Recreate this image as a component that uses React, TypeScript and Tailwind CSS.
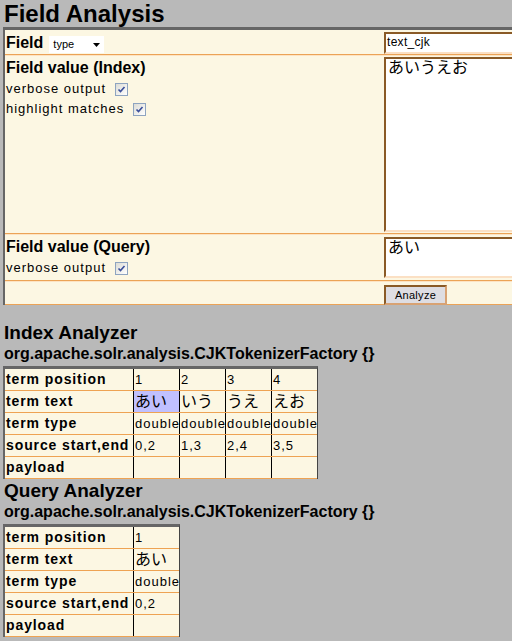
import React from "react";

type Token = {
  pos: string;
  text: string;
  type: string;
  offsets: string;
  highlight?: boolean;
};

const indexTokens: Token[] = [
  { pos: "1", text: "あい", type: "double", offsets: "0,2", highlight: true },
  { pos: "2", text: "いう", type: "double", offsets: "1,3" },
  { pos: "3", text: "うえ", type: "double", offsets: "2,4" },
  { pos: "4", text: "えお", type: "double", offsets: "3,5" },
];

const queryTokens: Token[] = [
  { pos: "1", text: "あい", type: "double", offsets: "0,2" },
];

const rowDefs: { label: string; cjk?: boolean; get: (t: Token) => string }[] = [
  { label: "term position", get: (t) => t.pos },
  { label: "term text", cjk: true, get: (t) => t.text },
  { label: "term type", get: (t) => t.type },
  { label: "source start,end", get: (t) => t.offsets },
  { label: "payload", get: () => "" },
];

const Checkbox = () => (
  <span className="ml-[9px] inline-flex h-[13px] w-[13px] items-center justify-center border border-[#8ea4c0] bg-gradient-to-br from-[#dcdcd6] to-white">
    <svg width="9" height="9" viewBox="0 0 9 9">
      <path d="M1.5 4.5L3.5 6.6L7.5 2" fill="none" stroke="#3b4f9a" strokeWidth="1.6" />
    </svg>
  </span>
);

const AnalyzerTable = ({ tokens }: { tokens: Token[] }) => (
  <div className="ml-[3px] inline-flex flex-col border-t-[3px] border-l-2 border-r border-t-[#666] border-l-[#666] border-r-[#444]">
    {rowDefs.map((r) => (
      <div key={r.label} className="flex h-[22px] border-b border-[#eea353] bg-[#fcf7e3]">
        <div className="w-[128px] whitespace-nowrap pl-[1px] text-[14px] font-bold leading-[21px] tracking-[0.9px]">
          {r.label}
        </div>
        {tokens.map((t) => (
          <div
            key={t.pos}
            className={
              "w-[46px] overflow-hidden whitespace-nowrap border-l border-black pl-[1px] " +
              (r.cjk ? "text-[16px] leading-[21px] " : "text-[13px] leading-[21px] tracking-[1px] ") +
              (r.cjk && t.highlight ? "bg-[#c0c0ff]" : "")
            }
          >
            {r.get(t)}
          </div>
        ))}
      </div>
    ))}
  </div>
);

export default function App() {
  return (
    <div className="min-h-screen w-[512px] overflow-hidden bg-[#b9b9b9] font-['Liberation_Sans','Noto_Sans_CJK_JP',sans-serif] text-black">
      <h2 className="h-[27px] pl-[4px] text-[24px] font-bold leading-[27px]">Field Analysis</h2>

      <div className="ml-[3px] w-[640px] border-l-2 border-t-[3px] border-[#666] bg-[#fcf7e3]">
        {/* field */}
        <div className="flex h-[25px] border-b border-[#eba356]">
          <div className="flex w-[379px] items-start pl-[1px] pt-[2px]">
            <span className="text-[16px] font-bold leading-[22px]">Field</span>
            <span className="relative ml-[6px] mt-[4px] flex h-[17px] w-[55px] items-center bg-white pl-[4px] text-[11px]">
              type
              <svg className="absolute right-[4px] top-[7px]" width="7" height="4" viewBox="0 0 7 4">
                <path d="M0 0H7L3.5 4Z" fill="#000" />
              </svg>
            </span>
          </div>
          <div className="pt-[2px]">
            <div className="h-[22px] w-[200px] border-2 border-b-[#fbe0c4] border-l-[#8a5a26] border-r-[#fbe0c4] border-t-[#8a5a26] bg-white pl-[1px] text-[12px] leading-[17px] tracking-[0.3px]">
              text_cjk
            </div>
          </div>
        </div>

        {/* index value */}
        <div className="flex h-[179px] border-b border-t border-b-[#eba356] border-t-[#fde3c2]">
          <div className="flex w-[379px] flex-col pl-[1px] pt-[1px]">
            <span className="text-[16px] font-bold leading-[22px]">Field value (Index)</span>
            <span className="flex h-[20px] items-center text-[13px] tracking-[1px]">
              verbose output <Checkbox />
            </span>
            <span className="flex h-[20px] items-center text-[13px] tracking-[1px]">
              highlight matches <Checkbox />
            </span>
          </div>
          <div className="pt-[1px]">
            <textarea
              readOnly
              defaultValue="あいうえお"
              className="h-[175px] w-[200px] resize-none border-2 border-b-[#fbe0c4] border-l-[#8a5a26] border-r-[#fbe0c4] border-t-[#8a5a26] bg-white px-[2px] text-[16px] leading-[18px] outline-none"
            />
          </div>
        </div>

        {/* query value */}
        <div className="flex h-[47px] border-b border-t border-b-[#eba356] border-t-[#fde3c2]">
          <div className="flex w-[379px] flex-col pl-[1px] pt-[1px]">
            <span className="text-[16px] font-bold leading-[22px]">Field value (Query)</span>
            <span className="flex h-[20px] items-center text-[13px] tracking-[1px]">
              verbose output <Checkbox />
            </span>
          </div>
          <div className="pt-[2px]">
            <textarea
              readOnly
              defaultValue="あい"
              className="h-[41px] w-[200px] resize-none border-2 border-b-[#fbe0c4] border-l-[#8a5a26] border-r-[#fbe0c4] border-t-[#8a5a26] bg-white px-[2px] text-[16px] leading-[18px] outline-none"
            />
          </div>
        </div>

        {/* submit */}
        <div className="flex h-[24px] border-b border-t border-b-[#eba356] border-t-[#fde3c2]">
          <div className="w-[379px]" />
          <div>
            <button className="h-[20px] w-[63px] border-2 border-b-[#d8a273] border-l-[#8a5a26] border-r-[#d8a273] border-t-[#8a5a26] bg-[#dedde2] text-[11px] leading-[14px] tracking-[0.3px]">
              Analyze
            </button>
          </div>
        </div>
      </div>

      <h3 className="mt-[17px] h-[22px] pl-[4px] text-[19px] font-bold leading-[22px]">Index Analyzer</h3>
      <h4 className="h-[20px] pl-[4px] text-[16px] font-bold leading-[20px]">
        org.apache.solr.analysis.CJKTokenizerFactory {"{}"}
      </h4>
      <div className="mt-[2px]">
        <AnalyzerTable tokens={indexTokens} />
      </div>

      <h3 className="mt-[1px] h-[22px] pl-[4px] text-[19px] font-bold leading-[22px]">Query Analyzer</h3>
      <h4 className="h-[20px] pl-[4px] text-[16px] font-bold leading-[20px]">
        org.apache.solr.analysis.CJKTokenizerFactory {"{}"}
      </h4>
      <div className="mt-[2px]">
        <AnalyzerTable tokens={queryTokens} />
      </div>
    </div>
  );
}
